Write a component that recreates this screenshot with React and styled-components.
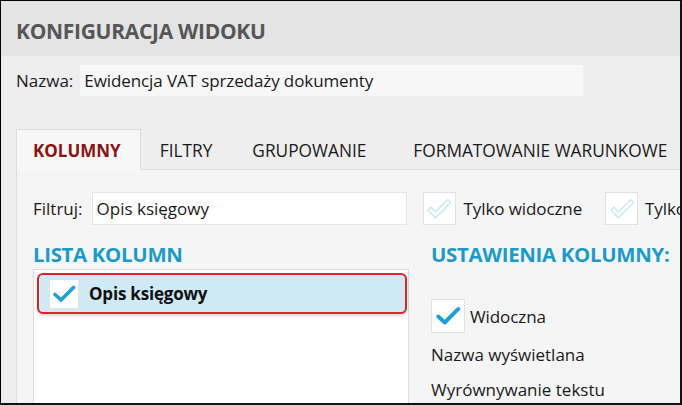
import styled, { createGlobalStyle } from "styled-components";

const GlobalStyle = createGlobalStyle`
  html, body {
    margin: 0;
    padding: 0;
    background: #eeeeee;
  }
  * {
    box-sizing: border-box;
  }
`;

const tabs = [
  { label: "KOLUMNY", left: 16, right: 19 },
  { label: "FILTRY", left: 18, right: 19 },
  { label: "GRUPOWANIE", left: 19, right: 21 },
  { label: "FORMATOWANIE WARUNKOWE", left: 24, right: 20 },
];

const CheckIcon = ({ size = 22 }) => (
  <svg width={size} height={size} viewBox="0 0 24 24" aria-hidden="true">
    <path d="M3 12.5 L9 18 L21.5 5.5" fill="none" stroke="#1ba1de" strokeWidth="3.6" strokeLinecap="round" strokeLinejoin="round" />
  </svg>
);

const GhostCheck = () => (
  <svg width="28" height="28" viewBox="0 0 24 24" aria-hidden="true">
    <path d="M2.5 13 L5 10.5 L9 14.5 L19.5 4 L22 6.5 L9 19.5 Z" fill="#ffffff" stroke="#bfe6f5" strokeWidth="1.1" strokeLinejoin="round" />
  </svg>
);

export default function App() {
  return (
    <>
      <GlobalStyle />
      <Frame>
        <Header>KONFIGURACJA WIDOKU</Header>
        <NameRow>
          <Label $gap={7}>Nazwa:</Label>
          <NameInput>Ewidencja VAT sprzedaży dokumenty</NameInput>
        </NameRow>
        <TabBar>
          {tabs.map((t, i) => (
            <Tab key={t.label} $active={i === 0} $left={t.left} $right={t.right}>{t.label}</Tab>
          ))}
        </TabBar>
        <Panel>
          <FilterRow>
            <Label $gap={9}>Filtruj:</Label>
            <FilterInput>Opis księgowy</FilterInput>
            <CheckBox $size={33}><GhostCheck /></CheckBox>
            <CheckLabel $gap={8}>Tylko widoczne</CheckLabel>
            <CheckBox $size={33} $gap={23}><GhostCheck /></CheckBox>
            <CheckLabel $gap={7}>Tylko wybrane</CheckLabel>
          </FilterRow>
          <Columns>
            <SectionTitle>LISTA KOLUMN</SectionTitle>
            <SectionTitle>USTAWIENIA KOLUMNY:</SectionTitle>
            <ListBox>
              <SelectedRow>
                <CheckBox $size={30}><CheckIcon size={24} /></CheckBox>
                <RowText>Opis księgowy</RowText>
              </SelectedRow>
            </ListBox>
            <Settings>
              <SettingCheck>
                <CheckBox $size={34}><CheckIcon size={26} /></CheckBox>
                <CheckLabel $gap={5}>Widoczna</CheckLabel>
              </SettingCheck>
              <SettingLabel>Nazwa wyświetlana</SettingLabel>
              <SettingLabel>Wyrównywanie tekstu</SettingLabel>
            </Settings>
          </Columns>
        </Panel>
      </Frame>
    </>
  );
}

const Frame = styled.div`
  width: 682px;
  height: 405px;
  overflow: hidden;
  background: #eeeeee;
  border-left: 1px solid #000;
  border-top: 1px solid #000;
  border-right: 2px solid #111;
  border-bottom: 2px solid #111;
  font-family: "Open Sans", "Noto Sans", sans-serif;
  color: #1a1a1a;
  display: flex;
  flex-direction: column;
`;

const Header = styled.div`
  height: 55px;
  flex-shrink: 0;
  background: #e4e4e4;
  display: flex;
  align-items: center;
  padding-left: 15px;
  padding-top: 4px;
  font-size: 21px;
  font-weight: 700;
  color: #565656;
  letter-spacing: -0.3px;
`;

const NameRow = styled.div`
  display: flex;
  align-items: center;
  padding: 9px 0 0 15px;
`;

const Label = styled.span`
  flex-shrink: 0;
  font-size: 17px;
  color: #1a1a1a;
  margin-right: ${(p) => p.$gap}px;
`;

const NameInput = styled.div`
  width: 503px;
  height: 31px;
  flex-shrink: 0;
  background: #f7f7f7;
  display: flex;
  align-items: center;
  padding-left: 4px;
  font-size: 17px;
  letter-spacing: -0.1px;
`;

const TabBar = styled.div`
  display: flex;
  margin: 33px 0 0 15px;
  height: 41px;
  border-bottom: 1px solid #dcdcdc;
  flex-shrink: 0;
`;

const Tab = styled.div`
  display: flex;
  align-items: center;
  flex-shrink: 0;
  padding: 2px ${(p) => p.$right}px 0 ${(p) => p.$left}px;
  font-size: ${(p) => (p.$active ? "17px" : "17.3px")};
  margin-bottom: -1px;
  color: ${(p) => (p.$active ? "#8a1414" : "#1a1a1a")};
  font-weight: ${(p) => (p.$active ? 700 : 400)};
  background: ${(p) => (p.$active ? "#f7f7f7" : "transparent")};
  border: 1px solid ${(p) => (p.$active ? "#dcdcdc" : "transparent")};
  border-bottom: 1px solid ${(p) => (p.$active ? "#f7f7f7" : "transparent")};
  white-space: nowrap;
`;

const Panel = styled.div`
  flex: 1;
  margin-left: 15px;
  background: #f5f5f5;
  border-left: 1px solid #dcdcdc;
  padding: 22px 0 0 16px;
  display: flex;
  flex-direction: column;
`;

const FilterRow = styled.div`
  display: flex;
  align-items: center;
  white-space: nowrap;
`;

const FilterInput = styled.div`
  width: 315px;
  height: 33px;
  flex-shrink: 0;
  background: #ffffff;
  border: 1px solid #e6e6e6;
  display: flex;
  align-items: center;
  padding-left: 4px;
  font-size: 17px;
  margin-right: 16px;
`;

const CheckBox = styled.div`
  width: ${(p) => p.$size}px;
  height: ${(p) => p.$size}px;
  flex-shrink: 0;
  background: #ffffff;
  border: 1px solid #e2e2e2;
  display: flex;
  align-items: center;
  justify-content: center;
  margin-left: ${(p) => p.$gap || 0}px;
`;

const CheckLabel = styled.span`
  flex-shrink: 0;
  font-size: 17px;
  margin-left: ${(p) => p.$gap}px;
  letter-spacing: -0.1px;
`;

const Columns = styled.div`
  flex: 1;
  display: grid;
  grid-template-columns: 376px 1fr;
  grid-template-rows: auto 1fr;
  column-gap: 22px;
  margin-top: 15px;
  white-space: nowrap;
`;

const SectionTitle = styled.div`
  height: 29px;
  font-size: 20.4px;
  font-weight: 700;
  color: #1b9bc9;
  letter-spacing: -0.3px;
`;

const ListBox = styled.div`
  background: #ffffff;
  border: 1px solid #dcdcdc;
  border-bottom: none;
  padding: 3px 1px 0 3px;
`;

const SelectedRow = styled.div`
  height: 41px;
  display: flex;
  align-items: center;
  padding-left: 10px;
  background: #cfe9f5;
  border: 2px solid #e0212b;
  border-radius: 6px;
  box-shadow: 0 2px 3px rgba(0, 0, 0, 0.15);
`;

const RowText = styled.span`
  font-size: 17px;
  font-weight: 700;
  color: #111;
  margin-left: 10px;
  letter-spacing: -0.2px;
`;

const Settings = styled.div`
  display: flex;
  flex-direction: column;
  padding-top: 30px;
`;

const SettingCheck = styled.div`
  display: flex;
  align-items: center;
  height: 34px;
`;

const SettingLabel = styled.div`
  font-size: 17px;
  margin-top: 9px;
  height: 24px;
  display: flex;
  align-items: center;
  & + & {
    margin-top: 11px;
  }
`;
